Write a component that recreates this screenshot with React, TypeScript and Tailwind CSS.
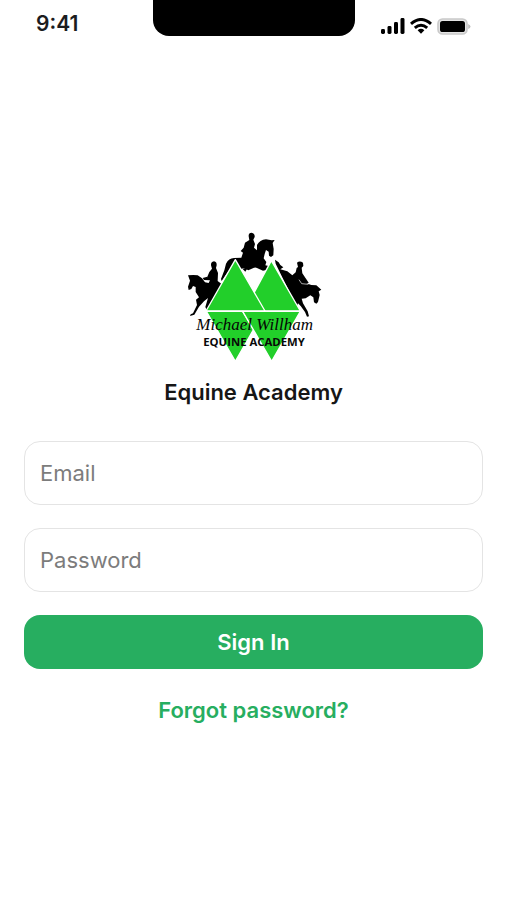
function Logo() {
  return (
    <svg
      width="147"
      height="145"
      viewBox="0 0 441 435"
      role="img"
      aria-label="Michael Willham Equine Academy"
    >
      <g fill="#000">
        {/* centre horse and rider */}
        <path d="M206 34Q205 23 215 23Q225 25 224 36L220 44L225 57L222 68L231 76L231 60Q239 45 258 43L275 46L284 45L278 54L281 72L280 91L273 96L267 92L266 80L258 75L254 87L251 100L259 111L256 121L269 124L263 132L244 131L237 126L222 128L205 136L193 130L176 133L160 120L146 138L135 153L125 168L123 162L133 136L138 116Q146 100 162 99L184 98L189 83L182 78L191 68L195 53L208 45Z" />
        <path d="M205 125L196 140L188 132ZM226 127L249 137L268 133L270 126L250 122Z" />
        {/* left horse and rider */}
        <path d="M93 121Q92 111 102 109Q111 111 110 121L108 129L114 144L113 168L126 178L124 197L104 221L92 240L82 258L76 246L84 219L72 229L57 245L43 269L30 273L32 268L39 265L51 240L48 224L57 217L47 201L47 186L39 183L34 192L26 195L24 185L30 167L24 151L40 150L53 151L66 160L75 172L86 174L90 166L82 163L82 155L88 141L96 131Z" />
        <path d="M82 155L68 159L72 165L90 166Z" />
        {/* right horse and rider */}
        <path d="M287 116L285 104L296 112L301 120L310 127L301 133L322 139L337 151L347 142L350 129L354 126L351 113Q359 106 369 113L370 123L365 128L367 145L374 155L377 174L394 180L409 181L424 194L416 199L419 210L414 231L409 236L402 232L400 217L391 211L377 220L365 221L369 235L383 259L387 274L381 275L375 261L362 243L354 235L350 245Z" />
        <path d="M365 151L376 158L386 173L377 178Z" />
      </g>
      <path
        d="M357 164L365 176L385 178"
        fill="none"
        stroke="#fff"
        strokeWidth="2"
      />
      <g fill="#22cf2a" stroke="#fff" strokeWidth="4" strokeLinejoin="round">
        <path d="M274 107L361 258L250 258L220 207Z" />
        <path d="M166 104L255 258L78 258Z" />
        <path d="M79 259L188 259L221 313L166 409Z" />
        <path d="M188 259L361 259L275 409Z" />
      </g>
      <text
        x="49"
        y="315"
        className="font-['Liberation_Serif',serif] italic"
        fontSize="51"
        fill="#050505"
      >
        Michael Willham
      </text>
      <text
        x="222"
        y="362"
        textAnchor="middle"
        className="font-['Open_Sans',sans-serif] font-bold"
        fontSize="34"
        fill="#080808"
      >
        EQUINE ACADEMY
      </text>
    </svg>
  );
}

function StatusBar() {
  return (
    <header className="grid h-[49px] grid-cols-[1fr_202px_1fr] items-start">
      <time className="pt-2.5 pl-9 text-[21px] leading-7 font-semibold text-[#1c1c1e]">
        9:41
      </time>
      <div className="h-9 rounded-b-2xl bg-black" />
      <div className="flex h-[52px] items-center justify-end gap-[5px] pr-9">
        <svg width="24" height="16" viewBox="0 0 24 16" aria-label="Signal">
          <rect x="0" y="11" width="4" height="5" rx="1.4" />
          <rect x="6.5" y="8" width="4" height="8" rx="1.4" />
          <rect x="13" y="4" width="4" height="12" rx="1.4" />
          <rect x="19.5" y="0" width="4" height="16" rx="1.4" />
        </svg>
        <svg
          width="22"
          height="16"
          viewBox="0 0 22 16"
          fill="none"
          stroke="#000"
          strokeWidth="3"
          aria-label="Wi-Fi"
        >
          <path d="M1 5.8Q11-2.8 21 5.8M4.8 9.8Q11 4.6 17.2 9.8" />
          <path d="M7.6 12.3Q11 9.4 14.4 12.3L11 15.8Z" fill="#000" stroke="none" />
        </svg>
        <svg width="34" height="17" viewBox="0 0 34 17" aria-label="Battery">
          <rect x="1" y="1" width="29" height="15" rx="4.5" fill="#e4e4e4" stroke="#c9c9c9" strokeWidth="1.6" />
          <rect x="3" y="3" width="25" height="11" rx="2.6" />
          <path d="M31.2 6Q33.5 7 33.5 8.5T31.2 11Z" fill="#bdbdbd" />
        </svg>
      </div>
    </header>
  );
}

const fieldClass =
  "h-16 w-full rounded-2xl border border-[#e4e4e4] bg-white px-[15px] text-[22px] text-[#222] outline-none placeholder:text-[#7c7c7c] focus:border-[#27ae60]";

export default function App() {
  return (
    <div className="flex min-h-screen flex-col bg-white font-['Inter',sans-serif]">
      <StatusBar />
      <main className="flex flex-1 flex-col items-center justify-center px-6">
        <Logo />
        <h1 className="mt-2 text-[22px] leading-7 font-semibold text-[#161616]">
          Equine Academy
        </h1>
        <form
          className="mt-[35px] flex w-full flex-col gap-[23px]"
          onSubmit={(event) => event.preventDefault()}
        >
          <input type="email" aria-label="Email" placeholder="Email" className={fieldClass} />
          <input type="password" aria-label="Password" placeholder="Password" className={fieldClass} />
          <button
            type="submit"
            className="h-[54px] rounded-2xl bg-[#27ae60] text-[22px] font-semibold text-white"
          >
            Sign In
          </button>
        </form>
        <a href="#forgot" className="mt-[27px] text-[22px] leading-7 font-semibold text-[#27ae60]">
          Forgot password?
        </a>
      </main>
    </div>
  );
}
